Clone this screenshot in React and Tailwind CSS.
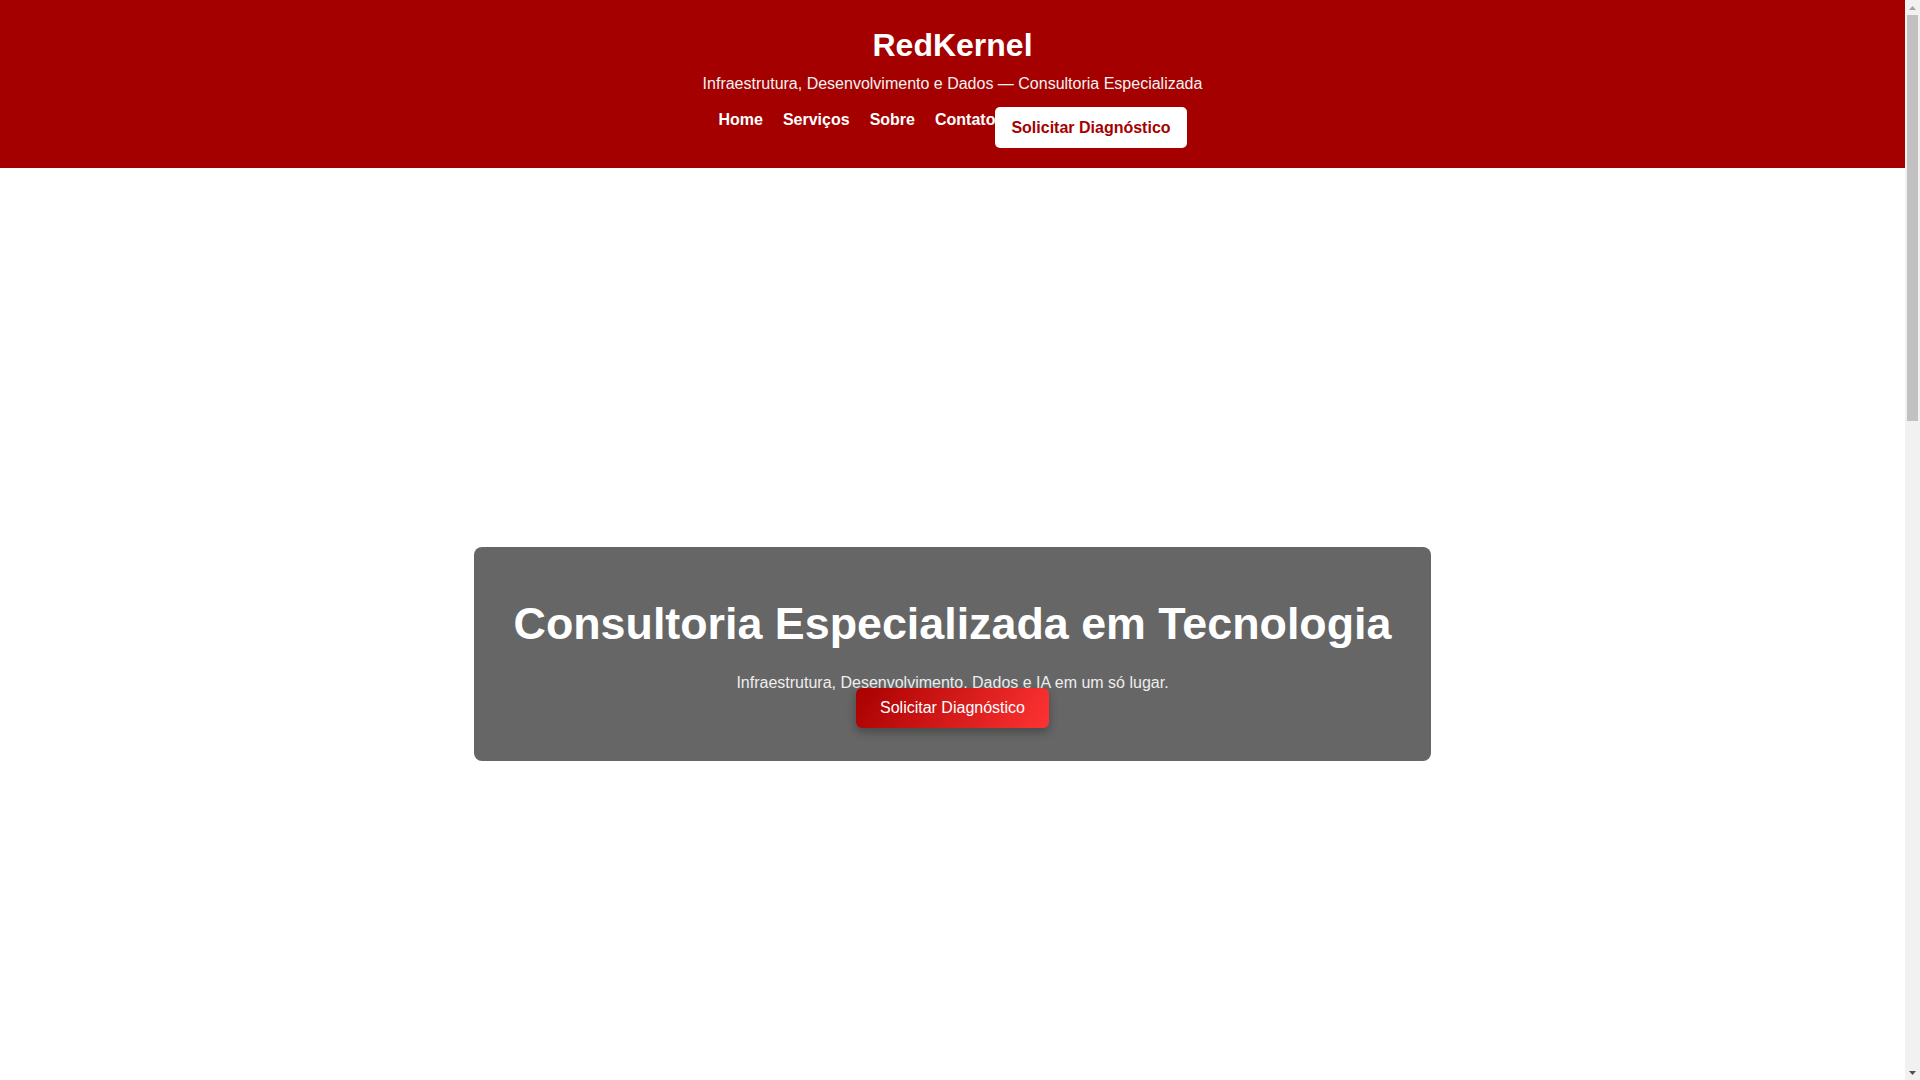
function ScrollStrip() {
  return (
    <div className="flex h-screen w-[15px] shrink-0 flex-col bg-[#f1f1f1]">
      <div className="flex h-[15px] items-center justify-center">
        <svg width="7" height="4" viewBox="0 0 7 4"><polygon points="3.5,0 7,4 0,4" fill="#a3a3a3" /></svg>
      </div>
      <div className="mx-[2px] h-[406px] bg-[#c1c1c1]" />
      <div className="flex-1" />
      <div className="flex h-[15px] items-center justify-center">
        <svg width="7" height="4" viewBox="0 0 7 4"><polygon points="0,0 7,0 3.5,4" fill="#505050" /></svg>
      </div>
    </div>
  )
}

export default function App() {
  const links = ['Home', 'Serviços', 'Sobre']

  return (
    <div className="flex h-screen overflow-hidden bg-white font-['Liberation_Sans',Arial,sans-serif]">
      <div className="min-w-0 flex-1">
        <header className="bg-[#a50000] pt-[27px] pb-[20px] text-center text-white">
          <h1 className="text-[32px] font-bold leading-[37px]">RedKernel</h1>
          <p className="mt-[11px] text-[16px] leading-[18px] text-[#f2f2f2]">
            Infraestrutura, Desenvolvimento e Dados — Consultoria Especializada
          </p>
          <nav className="mt-[14px] flex items-start justify-center">
            {links.map((l) => (
              <a key={l} href="#" className="mt-[4px] mr-5 text-[16px] font-bold leading-[18px] text-white">
                {l}
              </a>
            ))}
            <a href="#" className="mt-[4px] text-[16px] font-bold leading-[18px] text-white">Contato</a>
            <button className="h-[41px] rounded-[5px] bg-white px-[16px] text-[16px] font-bold leading-[18px] text-[#a50000]">
              Solicitar Diagnóstico
            </button>
          </nav>
        </header>

        {/* Hero */}
        <section className="flex min-h-[971px] items-center justify-center">
          <div className="rounded-[8px] bg-[#666666] px-10 pt-[50px] pb-[33px] text-center">
            <h2 className="text-[44.8px] font-bold leading-[52px] text-white">
              Consultoria Especializada em Tecnologia
            </h2>
            <p className="mt-[25px] text-[16px] leading-[18px] text-[#eeeeee]">
              Infraestrutura, Desenvolvimento, Dados e IA em um só lugar.
            </p>
            <button className="relative -mt-[4px] h-[40px] rounded-[6px] bg-[linear-gradient(120deg,#a80000,#ff3333)] px-6 text-[16px] leading-[18px] text-white shadow-[0_4px_10px_rgba(0,0,0,0.3)]">
              Solicitar Diagnóstico
            </button>
          </div>
        </section>
      </div>
      <ScrollStrip />
    </div>
  )
}
